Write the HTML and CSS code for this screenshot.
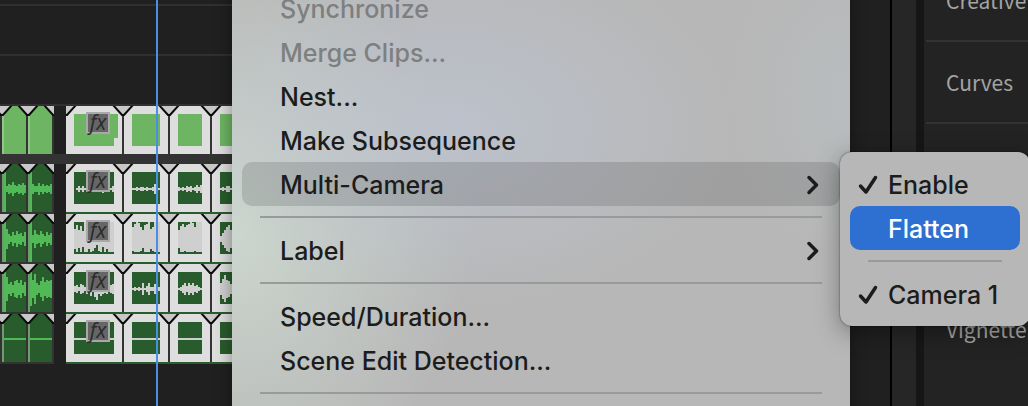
FILE: index.html
```html
<!DOCTYPE html>
<html lang="en">
<head>
    <meta charset="UTF-8">
    <meta name="viewport" content="width=device-width, initial-scale=1.0">
    <title>Sequence</title>
    <link rel="stylesheet" href="styles.css">
</head>
<body>
    <div class="workspace">
        <main class="timeline" id="timeline">
            <div class="track track-cut"></div>
            <div class="track"></div>
            <div class="track"></div>
            <div class="playhead"></div>
        </main>

        <div class="scroll-gutter"></div>

        <aside class="color-panel">
            <button class="section">Creative</button>
            <button class="section">Curves</button>
            <div class="section"></div>
            <div class="section"></div>
            <button class="section">Vignette</button>
        </aside>
    </div>

    <div class="menu context-menu" role="menu">
        <button class="item" role="menuitem" disabled>Synchronize</button>
        <button class="item" role="menuitem" disabled>Merge Clips...</button>
        <button class="item" role="menuitem">Nest...</button>
        <button class="item" role="menuitem">Make Subsequence</button>
        <button class="item open" role="menuitem">Multi-Camera
            <svg class="chevron" width="14" height="20" viewBox="0 0 14 20"><path d="M3 2.500 10.500 10 3 17.500"/></svg>
        </button>
        <hr>
        <button class="item" role="menuitem">Label
            <svg class="chevron" width="14" height="20" viewBox="0 0 14 20"><path d="M3 2.500 10.500 10 3 17.500"/></svg>
        </button>
        <hr>
        <button class="item" role="menuitem">Speed/Duration...</button>
        <button class="item" role="menuitem">Scene Edit Detection...</button>
        <hr>
    </div>

    <div class="menu submenu" role="menu">
        <button class="item" role="menuitemcheckbox" aria-checked="true">
            <svg class="check" width="20" height="20" viewBox="0 0 20 20"><path d="M2.500 11 8 17 17.500 2.500"/></svg>Enable
        </button>
        <button class="item selected" role="menuitem">Flatten</button>
        <hr>
        <button class="item" role="menuitemcheckbox" aria-checked="true">
            <svg class="check" width="20" height="20" viewBox="0 0 20 20"><path d="M2.500 11 8 17 17.500 2.500"/></svg>Camera 1
        </button>
    </div>

    <script>
        const timeline = document.getElementById('timeline');

        // Cut positions on every track
        const cuts = [2, 28, 54, 66, 123, 169, 211];
        // Unselected clips: [left, width]
        const clips = [[2, 24], [28, 24]];
        // Thumbnails of the selected clips: [left, width]
        const thumbs = [[74, 40], [132, 28], [178, 24], [220, 24]];

        // Wave heights above and below the middle, one per 2px column
        const tracks = [
            { type: 'video' },
            {
                type: 'audio',
                clips: [[24, 3, 5, 4, 7, 4, 3, 5, 4, 6, 4, 5], [24, 5, 3, 3, 6, 3, 5, 3, 4, 3, 5, 4]],
                thumbs: [[0, 1, 3, 1, 3, 1, 2, 3, 1, 2, 3, 1, 2, 1, 4, 2, 3, 2, 1, 3], [1, 1, 2, 1, 2, 2, 1, 2, 1, 1, 2, 5, 5, 1], [2, 1, 2, 1, 3, 2, 3, 1, 2, 4, 2, 4], [1, 2, 1, 3, 3, 1]]
            },
            {
                type: 'audio',
                clips: [[24, 10, 5, 3, 7, 4, 8, 5, 6, 3, 7, 3], [24, 4, 9, 5, 4, 8, 5, 3, 7, 4, 6, 4]],
                thumbs: [[10, 14, 9, 13, 8, 17, 17, 10, 15, 12, 9, 6, 12, 17, 8, 17, 10, 17, 17, 17], [12, 15, 17, 16, 12, 9, 14, 15, 17, 10, 12, 17, 17, 17], [9, 13, 15, 12, 14, 15, 17, 16, 12, 17, 17, 17], [3, 6, 9, 12, 14, 9]]
            },
            {
                type: 'audio',
                clips: [[24, 12, 5, 7, 4, 8, 9, 6, 9, 4, 7, 6], [17, 9, 15, 6, 4, 8, 12, 7, 9, 8, 9, 6]],
                thumbs: [[3, 4, 2, 5, 4, 2, 5, 4, 7, 3, 8, 11, 5, 7, 5, 4, 5, 3, 4, 5], [1, 2, 1, 2, 1, 6, 1, 3, 6, 2, 2, 5, 3, 2], [1, 2, 4, 6, 3, 6, 4, 6, 3, 4, 2, 1], [6, 10, 14, 9, 8, 5]]
            },
            {
                type: 'audio',
                clips: [Array(12).fill(1), Array(12).fill(1)],
                thumbs: [Array(20).fill(1), Array(14).fill(1), Array(12).fill(1), Array(6).fill(1)]
            }
        ];

        function rect(cls, x, y, w, h) {
            return `<rect class="${cls}" x="${x}" y="${y}" width="${w}" height="${h}"/>`;
        }

        function wave(cls, x, heights, limit) {
            return heights.map((h, i) => {
                const up = Math.min(h, 17);
                const down = Math.min(h, limit);
                return rect(cls, x + i * 2, 25 - up, 2, up + down);
            }).join('');
        }

        function drawTrack(track) {
            const video = track.type === 'video';
            let out = rect('divider', 0, 0, 54, 50) + rect('selected-clip', 66, 0, 178, 48);
            if (!video) {
                out += rect('audio-clip', 66, 48, 178, 2);
            }

            clips.forEach(([x, w], i) => {
                out += rect(video ? 'video-clip' : 'audio-clip', x, 0, w, 48);
                if (!video) {
                    out += wave('wave', x + 2, track.clips[i].slice(0, 11), 23);
                }
                out += rect('clip-edge', x, 8, 2, 40);
            });

            thumbs.forEach(([x, w], i) => {
                out += rect(video ? 'video-clip' : 'audio-clip', x, 8, w, 32);
                if (video && i === 0) {
                    out += rect('video-clip', x + w, 8, 4, 24);
                }
                if (!video) {
                    out += wave('thumb-wave', x, track.thumbs[i], 13);
                }
            });

            [122, 168, 210].forEach(x => {
                out += rect('divider', x, 0, 2, 48);
            });

            // Through-edit corners; the gap between 54 and 66 stays empty
            cuts.forEach(x => {
                out += `<path class="corner" d="M${x - 10} -1 L${x - 1} 9 L${x + 1} 9 L${x + 10} -1"/>`;
            });
            out += rect('gap', 54, -1, 12, 52);

            out += rect('badge', 87, 7, 22, 20);
            out += '<text class="badge-text" x="98" y="24">fx</text>';
            return out;
        }

        tracks.forEach(track => {
            const height = track.type === 'video' ? 48 : 50;
            const row = document.createElement('div');
            row.className = 'track ' + track.type;
            row.innerHTML = `<svg width="244" height="${height}" viewBox="0 0 244 ${height}">${drawTrack(track)}</svg>`;
            timeline.appendChild(row);
        });
    </script>
</body>
</html>
```

FILE: styles.css
```css
* {
    box-sizing: border-box;
}

body {
    margin: 0;
    height: 100vh;
    overflow: hidden;
    position: relative;
    background-color: #202020;
    font-family: Inter, "Liberation Sans", sans-serif;
}

button {
    border: none;
    background: none;
    text-align: left;
    font-family: inherit;
    white-space: nowrap;
}

.workspace {
    display: flex;
    height: 100vh;
    overflow: hidden;
}

/* Timeline */
.timeline {
    position: relative;
    flex: 1;
    min-width: 0;
    padding-right: 60px;
    background-color: #202020;
}

.track {
    height: 50px;
    border-bottom: 2px solid #303030;
}

.track-cut {
    height: 6px;
}

.track.video {
    height: 58px;
    border-bottom: 10px solid #333;
}

.track.audio {
    border-bottom: none;
}

.track svg {
    display: block;
}

.playhead {
    position: absolute;
    top: 0;
    bottom: 0;
    left: 156px;
    width: 2px;
    background-color: #4a8ee6;
}

.divider {
    fill: #333;
}

.gap {
    fill: #202020;
}

.selected-clip {
    fill: #dedede;
}

.video-clip {
    fill: #6db563;
}

.audio-clip {
    fill: #285c2c;
}

.clip-edge {
    fill: #b8d8b4;
    fill-opacity: 0.5;
}

.wave {
    fill: #51b956;
}

.thumb-wave {
    fill: #cfcfcf;
}

.corner {
    fill: #c8c8c8;
    stroke: #0a0a0a;
    stroke-width: 2;
}

.badge {
    fill: #666;
    stroke: #a8a8a8;
    stroke-width: 2;
}

.badge-text {
    fill: #2a2a2a;
    font: italic 21px "Open Sans", sans-serif;
    text-anchor: middle;
}

/* Right side */
.scroll-gutter {
    width: 34px;
    border-left: 2px solid #000;
    border-right: 8px solid #161616;
    background-color: #262626;
}

.color-panel {
    width: 104px;
    padding-left: 2px;
    margin-top: -40px;
    background-color: #232323;
    overflow: hidden;
}

.section {
    display: block;
    width: 100%;
    height: 82px;
    padding: 0 0 0 20px;
    border-bottom: 2px solid #333;
    color: #a4a4a4;
    font: 21px "Noto Sans CJK SC", sans-serif;
}

.section:last-child {
    border-bottom: none;
}

/* Menus */
.menu {
    position: absolute;
    padding: 10px;
    background-color: #b7b7b7;
    color: #1c1c1c;
}

.menu hr {
    height: 2px;
    margin: 10px 18px;
    border: none;
    background-color: #999b9b;
}

.context-menu {
    top: -24px;
    left: 232px;
    width: 618px;
    height: calc(100% + 48px);
    background-image:
        radial-gradient(ellipse 280px 180px at 220px 150px, rgba(190, 198, 212, 0.7), transparent),
        radial-gradient(ellipse 240px 280px at 0 250px, #ccd7ce, transparent),
        radial-gradient(ellipse 120px 160px at 618px 120px, #b8bcbe, transparent);
    box-shadow: 0 0 16px rgba(0, 0, 0, 0.4);
}

.submenu {
    top: 152px;
    left: 840px;
    width: 190px;
    border-radius: 12px;
    box-shadow: 0 0 2px rgba(0, 0, 0, 0.6), 0 6px 24px rgba(0, 0, 0, 0.35);
}

.item {
    display: flex;
    align-items: center;
    justify-content: space-between;
    width: 100%;
    height: 44px;
    padding: 2px 20px 0 38px;
    border-radius: 10px;
    color: inherit;
    font-size: 25px;
    font-weight: 450;
}

.item:disabled {
    color: #7d7f80;
}

.item.open {
    background-color: rgba(0, 0, 0, 0.13);
}

.item.selected {
    background-color: #2e6fd2;
    color: #fff;
    font-weight: 500;
}

.submenu .item {
    justify-content: flex-start;
    gap: 10px;
}

.submenu .item[aria-checked] {
    padding-left: 8px;
}

.chevron,
.check {
    flex: none;
    fill: none;
    stroke: #1c1c1c;
    stroke-width: 3.5;
    stroke-linecap: round;
    stroke-linejoin: round;
}
```
